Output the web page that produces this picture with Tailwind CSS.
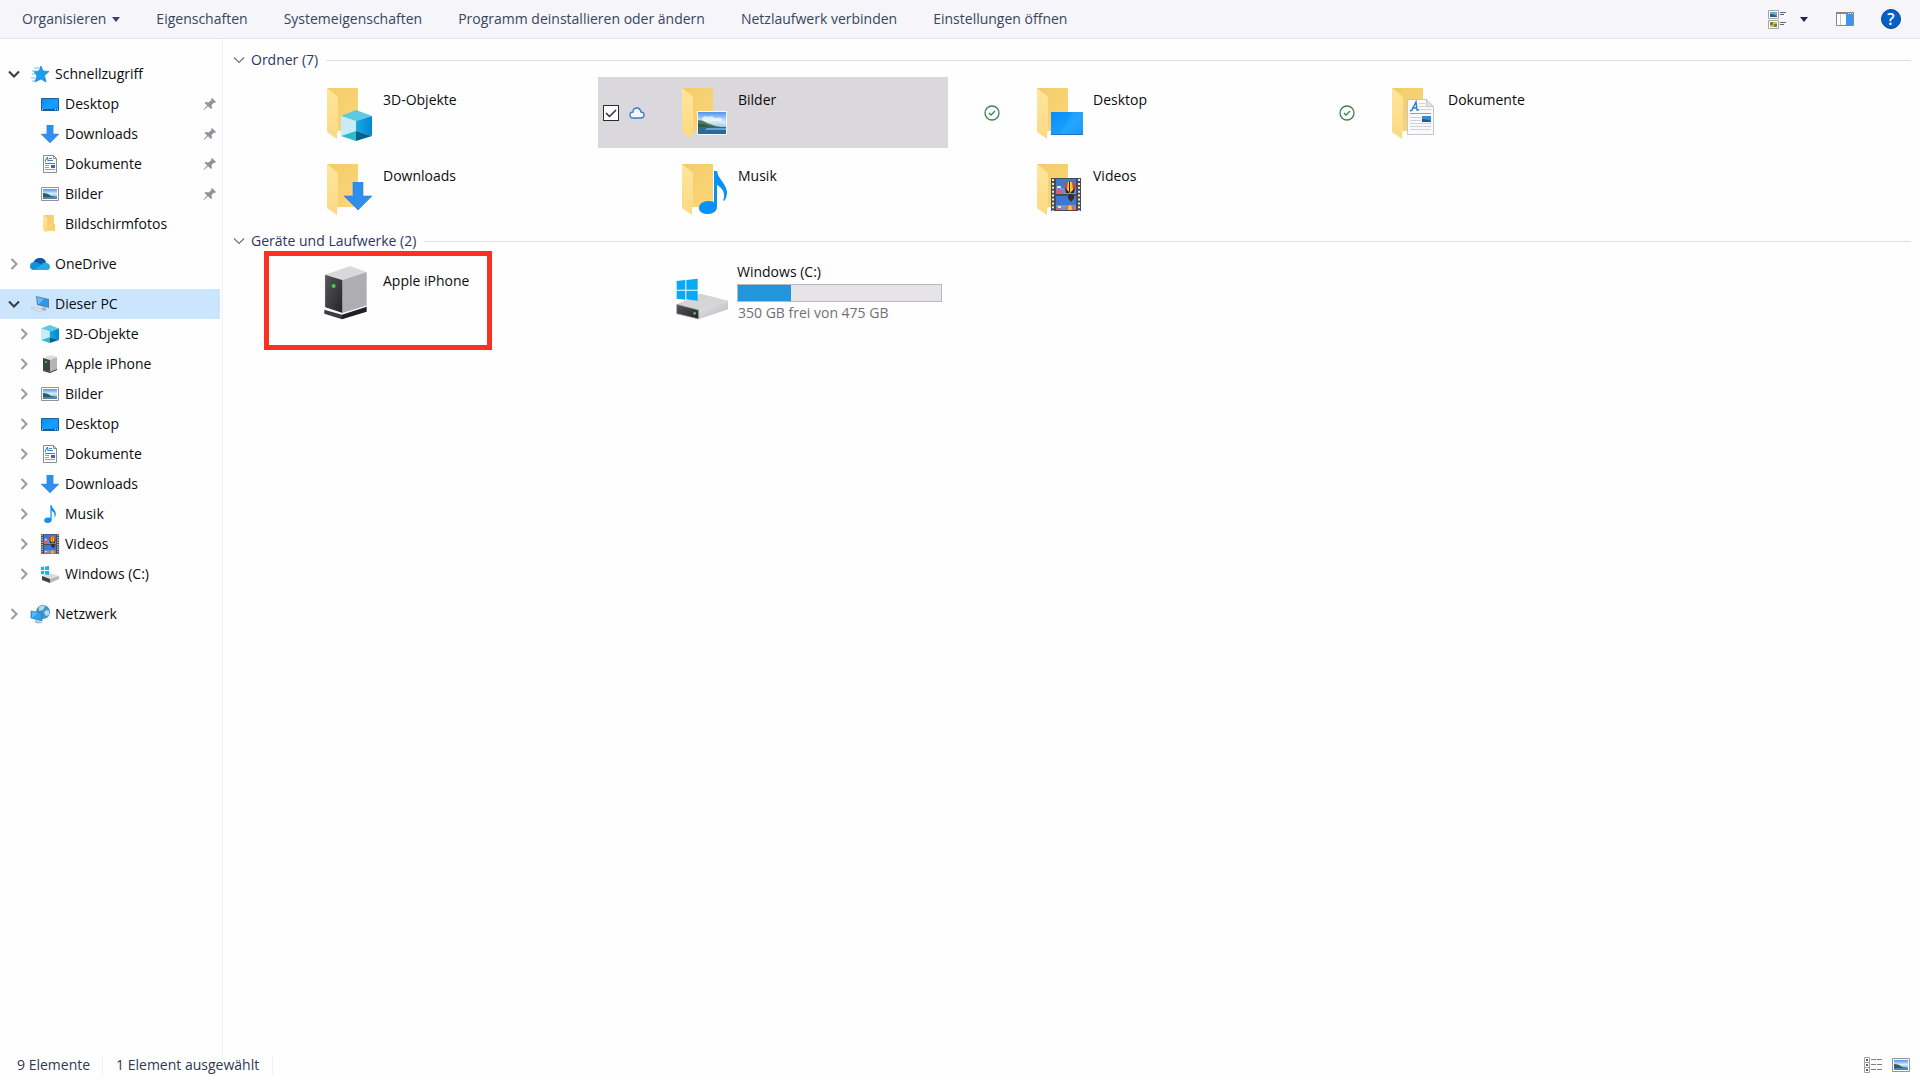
<!DOCTYPE html>
<html lang="de">
<head>
    <meta charset="UTF-8">
    <meta name="viewport" content="width=device-width, initial-scale=1.0">
    <title>Dieser PC</title>
    <script src="https://cdn.jsdelivr.net/npm/@tailwindcss/browser@4"></script>
</head>
<body class="flex flex-col min-h-screen bg-[#fefefe] text-[14px] leading-5 text-[#0c0c10] font-['Open_Sans','Noto_Sans',sans-serif]">

    <!-- Icon sprites -->
    <svg class="absolute size-0" aria-hidden="true">
        <defs>
            <linearGradient id="gBack" x1="0" y1="0" x2="1" y2="1"><stop offset="0" stop-color="#f3cb6a"/><stop offset="1" stop-color="#fbd777"/></linearGradient>
            <linearGradient id="gFlap" x1="0" y1="0" x2="0" y2="1"><stop offset="0" stop-color="#ffe69c"/><stop offset="1" stop-color="#fbd983"/></linearGradient>
            <linearGradient id="gSky" x1="0" y1="0" x2="0" y2="1"><stop offset="0" stop-color="#4f93ee"/><stop offset=".45" stop-color="#d8ecfb"/><stop offset=".7" stop-color="#9cc6dc"/><stop offset="1" stop-color="#2d6ba3"/></linearGradient>
            <linearGradient id="gScreen" x1="0" y1="0" x2="1" y2="1"><stop offset="0" stop-color="#0a8bf5"/><stop offset=".6" stop-color="#17a0ff"/><stop offset="1" stop-color="#0a8cf4"/></linearGradient>
            <linearGradient id="gCubeR" x1="0" y1="0" x2="1" y2="0"><stop offset="0" stop-color="#19a9dc"/><stop offset="1" stop-color="#0086d8"/></linearGradient>
            <linearGradient id="gMetal" x1="0" y1="0" x2="1" y2="1"><stop offset="0" stop-color="#e6e6e8"/><stop offset="1" stop-color="#b9b9bd"/></linearGradient>
            <linearGradient id="gDark" x1="0" y1="0" x2="1" y2="1"><stop offset="0" stop-color="#55555a"/><stop offset="1" stop-color="#252529"/></linearGradient>
        </defs>

        <symbol id="folder" viewBox="0 0 54 54">
            <path fill="url(#gBack)" d="M6 0h31v43H14z"/>
            <path fill="url(#gFlap)" d="M6 0l10 8q1 1 1 3v31q-1 1-1 9L6 44z"/>
        </symbol>
        <symbol id="cube" viewBox="0 0 31 31">
            <path fill="#5cc8e4" d="M15 0L31 6 15 11 0 6z"/>
            <path fill="#c8ecf7" d="M0 6l15 5v10L0 26z"/>
            <path fill="url(#gCubeR)" d="M31 6L15 11v10l16 5z"/>
            <path fill="#31b9cf" d="M0 26l15-5v10z"/>
            <path fill="#00638f" d="M31 26l-16-5v10z"/>
        </symbol>
        <symbol id="arrow" viewBox="0 0 28 28">
            <path fill="#2f8fec" stroke="#2a7fd8" stroke-width=".6" d="M9 0h10v14h9L14 28 0 14h9z"/>
        </symbol>
        <symbol id="photo" viewBox="0 0 30 24">
            <path fill="#f2f8fd" d="M0 0h30v24H0z"/>
            <path fill="url(#gSky)" d="M1 1h28v22H1z"/>
            <path fill="#fff" opacity=".7" d="M5 7q3-3 6-1 4-2 7 1 4-1 8 1l-2 2H6z"/>
            <path fill="#4d7a5a" d="M1 9q5 0 9 3 7 3 14 4H1z"/>
            <path fill="#2f5a4c" d="M1 13q5-1 11 2l8 1H1z"/>
            <path fill="#2f6896" d="M1 16h28v7H1z"/>
            <path fill="#6da3c8" d="M10 17h19v2H8z"/>
        </symbol>
        <symbol id="note" viewBox="0 0 28 43">
            <path fill="#0a90fa" d="M15 0h3c1 8 9 12 10 21 0 4-1 7-3 9-1-1-1-1 0-3 1-7-3-11-7-13v22c0 4-4 7-9 7-5 0-9-2-9-6s4-7 9-7c2 0 4 0 6 1z"/>
        </symbol>
        <symbol id="screen" viewBox="0 0 32 23">
            <path fill="url(#gScreen)" d="M0 0h32v23H0z"/>
            <path fill="#3bb0ff" opacity=".35" d="M22 0h10v23H8z"/>
            <path fill="#1d76c4" d="M0 22h32v1H0z"/>
        </symbol>
        <symbol id="film" viewBox="0 0 30 33">
            <path fill="#4a4b52" d="M0 0h30v33H0z"/>
            <path stroke="#e8e8ec" stroke-width="2" stroke-dasharray="2 1.9" d="M2 1v32M28 1v32"/>
            <path fill="#3f78d4" d="M5 1h20v15H5zM5 18h20v14H5z"/>
            <path fill="#5f98e4" d="M5 10h20v6H5zM5 27h20v5H5z"/>
            <circle cx="19" cy="9" r="5.5" fill="#d8432e"/><path fill="#f9c731" d="M17 4h4l1 8-2 3h-2l-2-3z"/><path fill="#2b2322" d="M18 4h1v10h-1zM14 10l5 5 5-5-1 5h-8z"/>
            <circle cx="20" cy="19" r="3" fill="#3b2a35"/><path fill="#3b2a35" d="M17 20h6l-3 4z"/>
            <path fill="#f0653a" d="M14 32q0-5 5-5t5 5z"/><path fill="#f9c731" d="M17 32q0-5 2-5t2 5z"/>
            <path fill="#d85d77" d="M5 13l3-3 2 3 2-1v4H5zM5 30l3-2 3 4H5z"/><path fill="#f4e3a0" d="M6 8h4v2H6zM7 28h3v2H7z"/>
        </symbol>
        <symbol id="document" viewBox="0 0 27 36">
            <path fill="#f9fafc" stroke="#c3c6ce" d="M.5.500h19l7 7v28H.5z"/>
            <path fill="#dfe2e8" stroke="#c3c6ce" d="M19.500.5v7h7z"/>
            <path fill="none" stroke="#2b7ccb" stroke-width="1.400" d="M3 12l2-1 4-8 1 8h2M5 9h5"/>
            <path stroke="#66aeda" d="M3 14.500h21"/>
            <path stroke="#cfd2d9" d="M12 4.500h6M12 7.500h7M12 10.500h12M3 18.500h11M3 21.500h11M3 24.500h21M3 27.500h21M3 30.500h21"/>
            <path fill="#3a8ccd" d="M15 17h9v6h-9z"/><path fill="#24587d" d="M15 20q4 0 9 2v1h-9z"/>
        </symbol>
        <symbol id="tower" viewBox="306 124 162 162">
            <path fill="#d9d9db" d="M318 150l75-26 50 18-73 24z"/>
            <path fill="#aeaeb2" d="M370 166l73-24v101l-73 22z"/>
            <path fill="url(#gDark)" d="M318 150l52 16v99l-52-17z"/>
            <path fill="none" stroke="#f0f0f2" stroke-width="3" d="M317 150v99l53 18 73-23"/>
            <path fill="#3c3d41" d="M316 255l53 15v14l-53-17z"/>
            <path fill="#1f2023" d="M369 270l74-24v15l-74 23z"/>
            <circle cx="344" cy="184" r="6" fill="#30d848"/>
        </symbol>
        <symbol id="drive" viewBox="46 50 162 162">
            <path fill="#d5d5d8" d="M48 162l72-32 82 21-88 28z"/>
            <path fill="url(#gMetal)" d="M114 179l88-28v26l-88 30z"/>
            <path fill="url(#gDark)" stroke="#a9a9ad" stroke-width="2" d="M48 162l66 17v27l-66-16z"/>
            <circle cx="102" cy="189" r="4" fill="#30d848"/>
            <path fill="#08a9f5" d="M48 92l26-3v29H48zM77 89l34-4v33H77zM48 121h26v27l-26-3zM77 121h34v30l-34-4z"/>
        </symbol>

        <symbol id="star" viewBox="0 0 20 20">
            <path fill="#1d9df2" stroke="#1580cf" stroke-width=".7" d="M11 2l2 5 6 .5-4.500 4L16 18l-5-3-6 3 2-6-3-4.500L9 7z"/>
            <path stroke="#6fbdf2" stroke-width="1.200" d="M4 4h5M2 7h4M2 10h4M1 14h4M2 17h3"/>
        </symbol>
        <symbol id="screenSmall" viewBox="0 0 20 20">
            <path fill="url(#gScreen)" stroke="#1d5f9c" d="M1.500 4.500h17v12h-17z"/>
            <path stroke="#0a5ba6" d="M2 15.500h16"/><path stroke="#d8efff" d="M2 15.500h1M15 15.500h1M17 15.500h1"/>
        </symbol>
        <symbol id="documentSmall" viewBox="0 0 20 20">
            <path fill="#fbfbfc" stroke="#8a8d94" d="M3.500 1.500h10l3 3v14h-13z"/>
            <path fill="none" stroke="#8a8d94" d="M13.500 1.500v3h3"/>
            <path stroke="#3f86c6" d="M9 4.500h3M5 7.500h1M8 6.500h5M5 9.500h10"/><path fill="none" stroke="#2b7ccb" d="M5 7l2.500-4L8 7"/>
            <path stroke="#9a9da5" d="M5 11.500h4M5 13.500h4M5 15.500h10"/><path fill="#2f6ca8" d="M11 11h4v3h-4z"/>
        </symbol>
        <symbol id="photoSmall" viewBox="0 0 20 20">
            <path fill="#fff" stroke="#8f939b" d="M1.500 3.500h17v13h-17z"/>
            <path fill="url(#gSky)" d="M3 5h14v10H3z"/><path fill="#2f5f62" d="M3 9q5 0 8 3l6 1v1H3z"/><path fill="#4f86b0" d="M3 13h14v2H3z"/>
        </symbol>
        <symbol id="folderSmall" viewBox="0 0 20 20">
            <path fill="url(#gBack)" d="M4 1h10v16H4z"/><path fill="#fbd06c" d="M13 10h2v7h-2z"/><path fill="url(#gFlap)" d="M3 1l4 3v15l-4-3z"/>
        </symbol>
        <symbol id="towerSmall" viewBox="0 0 20 20">
            <path fill="#dcdcde" d="M3 4l8-3 6 2-7 3z"/><path fill="#b4b4b8" d="M10 6l7-3v12l-7 3z"/><path fill="#3d4543" d="M3 4l7 2v12l-7-2z"/>
            <path fill="#26272a" d="M3 16l7 2 7-3v1l-7 3-7-2z"/><circle cx="6" cy="8" r="1" fill="#38d850"/>
        </symbol>
        <symbol id="driveSmall" viewBox="0 0 20 20">
            <path fill="#dcdcdf" d="M2 12l8-3 9 3-9 4z"/><path fill="#b7b7bb" d="M10 15l9-3v3l-9 4z"/><path fill="#3f4044" d="M2 12l8 3v4l-8-3z"/>
            <path fill="#16b4ee" d="M1 3l3-.500V6H1zM5 2.500L9 2v4H5zM1 7h3v3.500L1 10zM5 7h4v4l-4-.500z"/>
        </symbol>
        <symbol id="onedrive" viewBox="0 0 20 20">
            <path fill="#0f6ccb" d="M3 10Q4 4 10 4q5 0 6 5l-7 5-7-1z"/>
            <path fill="#0c59a4" d="M4 8q2-4 6-4 4 0 6 4-4 0-6 2-3-2-6-2z"/>
            <path fill="#1490df" d="M4 16q-4 0-4-4t5-4q3 0 6 3l5 5z"/>
            <path fill="#29a9ea" d="M4 16l8-6q2-2 5-1 3 1 3 4t-3 3z"/>
        </symbol>
        <symbol id="pc" viewBox="0 0 20 20">
            <path fill="#5f7f9d" d="M6 2l13 3v9L7 11z"/><path fill="#2b98ea" d="M7 3l11 3v7L8 10z"/><path fill="#63bdf8" d="M7 3l7 2-5 5H8z"/>
            <path fill="#a4afbb" d="M13 13l-2 3 5 1v-3z"/><path fill="#dfe4ea" stroke="#aab3bd" stroke-width=".5" d="M1 14l4-1 9 3-4 2z"/>
        </symbol>
        <symbol id="network" viewBox="0 0 20 20">
            <circle cx="13" cy="8" r="7" fill="#4a94c3"/><path fill="#b3dcec" d="M9 3q4-2 6-1l-2 4-4 1zM16 6l3 1v4l-3 1-2-3z"/>
            <path fill="#2d9ff0" stroke="#2178b8" stroke-width=".7" d="M1 7l11 2v8L1 14z"/><path fill="#59b8f8" d="M2 8l6 1-6 5z"/><path fill="#a9bccb" d="M5 16l6 2 2 1-5 .5-3-1z"/>
        </symbol>
        <symbol id="pin" viewBox="0 0 14 14">
            <path fill="#8e9299" d="M9 1l4 4-1 1-1-.500L8.500 8l.5 3-1 1-3-2.700L1 13 .5 12.500 4.200 8.500 1.500 6l1-1 3 .5L8.500 3 8 2z"/>
        </symbol>
        <symbol id="right" viewBox="0 0 12 12"><path fill="none" stroke="#9a9a9e" stroke-width="2" d="M3.500 1L8.500 6l-5 5"/></symbol>
        <symbol id="down" viewBox="0 0 12 12"><path fill="none" stroke="#33383f" stroke-width="2" d="M1 3.500l5 5 5-5"/></symbol>
        <symbol id="thinDown" viewBox="0 0 12 12"><path fill="none" stroke="#6f7278" stroke-width="1.200" d="M1 3.500l5 5 5-5"/></symbol>
        <symbol id="synced" viewBox="0 0 16 16"><circle cx="8" cy="8" r="7" fill="none" stroke="#3a8450" stroke-width="1.300"/><path fill="none" stroke="#3a8450" stroke-width="1.300" d="M5 8l2 2 4-4"/></symbol>
        <symbol id="cloud" viewBox="0 0 16 16"><path fill="#f4f7fc" stroke="#3a78cc" stroke-width="1.300" d="M4 13q-3 0-3-3t3-3q0-4 4-4 3 0 4 4 3 0 3 3t-3 3z"/></symbol>
        <symbol id="caret" viewBox="0 0 8 5"><path fill="currentColor" d="M0 0h8L4 5z"/></symbol>
    </svg>

    <!-- Command bar -->
    <header class="flex items-center h-[39px] pl-[22px] pr-[19px] bg-[#f5f5fa] border-b border-[#e4e5eb] text-[#39455c]">
        <div class="flex items-center gap-9">
            <button class="flex items-center gap-[6px]">Organisieren <svg class="w-2 h-[5px]"><use href="#caret"/></svg></button>
            <button>Eigenschaften</button>
            <button>Systemeigenschaften</button>
            <button>Programm deinstallieren oder ändern</button>
            <button>Netzlaufwerk verbinden</button>
            <button>Einstellungen öffnen</button>
        </div>
        <div class="flex items-center ml-auto">
            <button aria-label="Ansicht ändern" class="flex items-center gap-[14px] mr-7">
                <svg class="w-[18px] h-[19px]" viewBox="0 0 18 19">
                    <path fill="#fff" stroke="#a3a5aa" d="M.5.500h10v8H.5zM.5 10.500h10v8H.5z"/>
                    <path fill="#6eaad8" d="M2 2h7v5H2z"/><path fill="#2e6268" d="M2 4q4 0 7 2v1H2z"/>
                    <path fill="#d9b845" d="M2 12h7v5H2z"/><path fill="#5b8c3c" d="M2 12h3v3H2zM6 14h3v3H6z"/>
                    <path stroke="#63666e" d="M12 2.500h6M12 4.500h4M12 12.500h6M12 14.500h4"/>
                </svg>
                <svg class="w-2 h-[5px] text-[#23285a]"><use href="#caret"/></svg>
            </button>
            <button aria-label="Vorschaufenster" class="mr-[27px]">
                <svg class="w-[18px] h-[14px]" viewBox="0 0 18 14">
                    <path fill="#fff" stroke="#85888f" d="M.5.500h17v13H.5z"/><path fill="#85888f" d="M0 0h18v2H0z"/>
                    <path stroke="#c6c8cd" d="M4.500 2v11"/><path fill="#3c95e8" d="M10 2h7v11h-7z"/><path stroke="#e8eaf0" stroke-dasharray="1 1" d="M12 1.500h5"/>
                </svg>
            </button>
            <button aria-label="Hilfe" class="flex items-center justify-center size-5 rounded-full bg-[#0560c8] border border-[#0b4490] text-white text-base leading-none font-semibold">?</button>
        </div>
    </header>

    <div class="flex grow">
        <!-- Navigation -->
        <nav class="flex flex-col gap-[10px] w-[223px] shrink-0 pt-5 border-r border-[#f1f1f4]">
            <ul class="pr-[2px]">
                <li><a href="#" class="flex items-center h-[30px] pl-2"><svg class="size-3 mr-[10px]"><use href="#down"/></svg><svg class="size-5 mr-[5px]"><use href="#star"/></svg>Schnellzugriff</a></li>
                <li><a href="#" class="flex items-center h-[30px] pl-10"><svg class="size-5 mr-[5px]"><use href="#screenSmall"/></svg>Desktop<svg class="size-[14px] ml-auto mr-[3px]"><use href="#pin"/></svg></a></li>
                <li><a href="#" class="flex items-center h-[30px] pl-10"><svg class="w-5 h-[18px] mr-[5px]"><use href="#arrow"/></svg>Downloads<svg class="size-[14px] ml-auto mr-[3px]"><use href="#pin"/></svg></a></li>
                <li><a href="#" class="flex items-center h-[30px] pl-10"><svg class="size-5 mr-[5px]"><use href="#documentSmall"/></svg>Dokumente<svg class="size-[14px] ml-auto mr-[3px]"><use href="#pin"/></svg></a></li>
                <li><a href="#" class="flex items-center h-[30px] pl-10"><svg class="size-5 mr-[5px]"><use href="#photoSmall"/></svg>Bilder<svg class="size-[14px] ml-auto mr-[3px]"><use href="#pin"/></svg></a></li>
                <li><a href="#" class="flex items-center h-[30px] pl-10"><svg class="size-5 mr-[5px]"><use href="#folderSmall"/></svg>Bildschirmfotos</a></li>
            </ul>
            <ul class="pr-[2px]">
                <li><a href="#" class="flex items-center h-[30px] pl-2"><svg class="size-3 mr-[10px]"><use href="#right"/></svg><svg class="size-5 mr-[5px]"><use href="#onedrive"/></svg>OneDrive</a></li>
            </ul>
            <ul class="pr-[2px]">
                <li><a href="#" aria-current="page" class="flex items-center h-[30px] pl-2 bg-[#cce5ff]"><svg class="size-3 mr-[10px]"><use href="#down"/></svg><svg class="size-5 mr-[5px]"><use href="#pc"/></svg>Dieser PC</a></li>
                <li><a href="#" class="flex items-center h-[30px] pl-[18px]"><svg class="size-3 mr-[10px]"><use href="#right"/></svg><svg class="w-5 h-[18px] mr-[5px]"><use href="#cube"/></svg>3D-Objekte</a></li>
                <li><a href="#" class="flex items-center h-[30px] pl-[18px]"><svg class="size-3 mr-[10px]"><use href="#right"/></svg><svg class="size-5 mr-[5px]"><use href="#towerSmall"/></svg>Apple iPhone</a></li>
                <li><a href="#" class="flex items-center h-[30px] pl-[18px]"><svg class="size-3 mr-[10px]"><use href="#right"/></svg><svg class="size-5 mr-[5px]"><use href="#photoSmall"/></svg>Bilder</a></li>
                <li><a href="#" class="flex items-center h-[30px] pl-[18px]"><svg class="size-3 mr-[10px]"><use href="#right"/></svg><svg class="size-5 mr-[5px]"><use href="#screenSmall"/></svg>Desktop</a></li>
                <li><a href="#" class="flex items-center h-[30px] pl-[18px]"><svg class="size-3 mr-[10px]"><use href="#right"/></svg><svg class="size-5 mr-[5px]"><use href="#documentSmall"/></svg>Dokumente</a></li>
                <li><a href="#" class="flex items-center h-[30px] pl-[18px]"><svg class="size-3 mr-[10px]"><use href="#right"/></svg><svg class="w-5 h-[18px] mr-[5px]"><use href="#arrow"/></svg>Downloads</a></li>
                <li><a href="#" class="flex items-center h-[30px] pl-[18px]"><svg class="size-3 mr-[10px]"><use href="#right"/></svg><svg class="w-5 h-[18px] mr-[5px]"><use href="#note"/></svg>Musik</a></li>
                <li><a href="#" class="flex items-center h-[30px] pl-[18px]"><svg class="size-3 mr-[10px]"><use href="#right"/></svg><svg class="size-5 mr-[5px]"><use href="#film"/></svg>Videos</a></li>
                <li><a href="#" class="flex items-center h-[30px] pl-[18px]"><svg class="size-3 mr-[10px]"><use href="#right"/></svg><svg class="size-5 mr-[5px]"><use href="#driveSmall"/></svg>Windows (C:)</a></li>
            </ul>
            <ul class="pr-[2px]">
                <li><a href="#" class="flex items-center h-[30px] pl-2"><svg class="size-3 mr-[10px]"><use href="#right"/></svg><svg class="size-5 mr-[5px]"><use href="#network"/></svg>Netzwerk</a></li>
            </ul>
        </nav>

        <main class="grow pt-[11px]">
            <!-- Folders -->
            <section>
                <h2 class="flex items-center h-5 pl-[10px] pr-[9px] text-[#2c3766]">
                    <button class="flex items-center gap-[6px]"><svg class="size-3"><use href="#thinDown"/></svg>Ordner (7)</button>
                    <span class="grow h-px ml-2 bg-[#dfe0e4]"></span>
                </h2>
                <div class="grid grid-cols-[repeat(auto-fill,350px)] gap-[5px] pl-5 pt-[7px]">
                    <div class="flex h-[71px] pl-[78px]">
                        <svg class="size-[54px] mt-[11px] mr-2" viewBox="0 0 54 54"><use href="#folder" width="54" height="54"/><use href="#cube" x="20" y="22" width="31" height="31"/></svg>
                        <a href="#" class="pt-[13px]">3D-Objekte</a>
                    </div>
                    <div class="flex h-[71px] pl-[5px] bg-[#dad8dc]">
                        <label class="relative self-center size-4">
                            <input type="checkbox" checked aria-label="Bilder auswählen" class="block appearance-none size-4 bg-white border border-[#2b2b30]">
                            <svg class="absolute inset-0 size-4" viewBox="0 0 16 16"><path fill="none" stroke="#2b2b30" stroke-width="1.500" d="M3 8l3.500 3.500L13 5"/></svg>
                        </label>
                        <svg class="self-center size-4 ml-[10px] mr-[31px]"><use href="#cloud"/></svg>
                        <svg class="size-[54px] mt-[11px] mr-2" viewBox="0 0 54 54"><use href="#folder" width="54" height="54"/><use href="#photo" x="21" y="23" width="30" height="24"/></svg>
                        <a href="#" class="pt-[13px]">Bilder</a>
                    </div>
                    <div class="flex h-[71px] pl-[31px]">
                        <svg class="self-center size-4 mr-[31px]"><use href="#synced"/></svg>
                        <svg class="size-[54px] mt-[11px] mr-2" viewBox="0 0 54 54"><use href="#folder" width="54" height="54"/><use href="#screen" x="20" y="24" width="32" height="23"/></svg>
                        <a href="#" class="pt-[13px]">Desktop</a>
                    </div>
                    <div class="flex h-[71px] pl-[31px]">
                        <svg class="self-center size-4 mr-[31px]"><use href="#synced"/></svg>
                        <svg class="size-[54px] mt-[11px] mr-2" viewBox="0 0 54 54"><use href="#folder" width="54" height="54"/><use href="#document" x="21" y="11" width="27" height="36"/></svg>
                        <a href="#" class="pt-[13px]">Dokumente</a>
                    </div>
                    <div class="flex h-[71px] pl-[78px]">
                        <svg class="size-[54px] mt-[11px] mr-2" viewBox="0 0 54 54"><use href="#folder" width="54" height="54"/><use href="#arrow" x="23" y="18" width="28" height="28"/></svg>
                        <a href="#" class="pt-[13px]">Downloads</a>
                    </div>
                    <div class="flex h-[71px] pl-[78px]">
                        <svg class="size-[54px] mt-[11px] mr-2" viewBox="0 0 54 54"><use href="#folder" width="54" height="54"/><use href="#note" x="23" y="7" width="28" height="43"/></svg>
                        <a href="#" class="pt-[13px]">Musik</a>
                    </div>
                    <div class="flex h-[71px] pl-[78px]">
                        <svg class="size-[54px] mt-[11px] mr-2" viewBox="0 0 54 54"><use href="#folder" width="54" height="54"/><use href="#film" x="20" y="14" width="30" height="33"/></svg>
                        <a href="#" class="pt-[13px]">Videos</a>
                    </div>
                </div>
            </section>

            <!-- Devices and drives -->
            <section class="pt-[7px]">
                <h2 class="flex items-center h-5 pl-[10px] pr-[9px] text-[#2c3766]">
                    <button class="flex items-center gap-[6px]"><svg class="size-3"><use href="#thinDown"/></svg>Geräte und Laufwerke (2)</button>
                    <span class="grow h-px ml-2 bg-[#dfe0e4]"></span>
                </h2>
                <div class="grid grid-cols-[repeat(auto-fill,350px)] gap-[5px] pl-5 pt-[5px]">
                    <div class="relative flex h-[71px] pl-[78px]">
                        <svg class="size-[54px] mt-[10px] mr-2"><use href="#tower"/></svg>
                        <a href="#" class="pt-[15px]">Apple iPhone</a>
                        <!-- Highlight frame -->
                        <div class="absolute left-[21px] -top-[5px] w-[228px] h-[99px] border-5 border-[#f93022]"></div>
                    </div>
                    <div class="flex h-[71px] pl-[78px]">
                        <svg class="size-[54px] mt-[11px] mr-[7px]"><use href="#drive"/></svg>
                        <div class="w-[205px] pt-[6px]">
                            <a href="#" class="block">Windows (C:)</a>
                            <div role="progressbar" aria-label="Belegter Speicher" aria-valuenow="26" class="h-[18px] mt-[2px] bg-[#e6e4e8] border border-[#b8b8bd]">
                                <div class="h-full bg-[#2196dc]" style="width: 26%"></div>
                            </div>
                            <p class="mt-px pl-px text-[#707078]">350 GB frei von 475 GB</p>
                        </div>
                    </div>
                </div>
            </section>
        </main>
    </div>

    <!-- Status bar -->
    <footer class="flex items-center h-6 pb-[6px] pl-[17px] pr-[9px] text-[#2f3a52]">
        <span class="pr-3 border-r border-[#f1f1f4]">9 Elemente</span>
        <span class="px-[13px] border-r border-[#f1f1f4]">1 Element ausgewählt</span>
        <div class="flex items-center gap-[9px] ml-auto">
            <button aria-label="Details">
                <svg class="w-[18px] h-4" viewBox="0 0 18 16">
                    <path fill="#fff" stroke="#a0a2a8" d="M.5.500h5v15h-5zM.5 5.500h5M.5 10.500h5"/><path fill="#5b6570" d="M2 2h2v2H2zM2 7h2v2H2z"/><path fill="#7a5540" d="M2 12h2v2H2z"/>
                    <path stroke="#7b7e85" d="M7 2.500h5M13 2.500h5M7 7.500h5M13 7.500h5M7 12.500h5M13 12.500h5"/>
                </svg>
            </button>
            <button aria-label="Große Symbole"><svg class="size-5"><use href="#photoSmall"/></svg></button>
        </div>
    </footer>
</body>
</html>
